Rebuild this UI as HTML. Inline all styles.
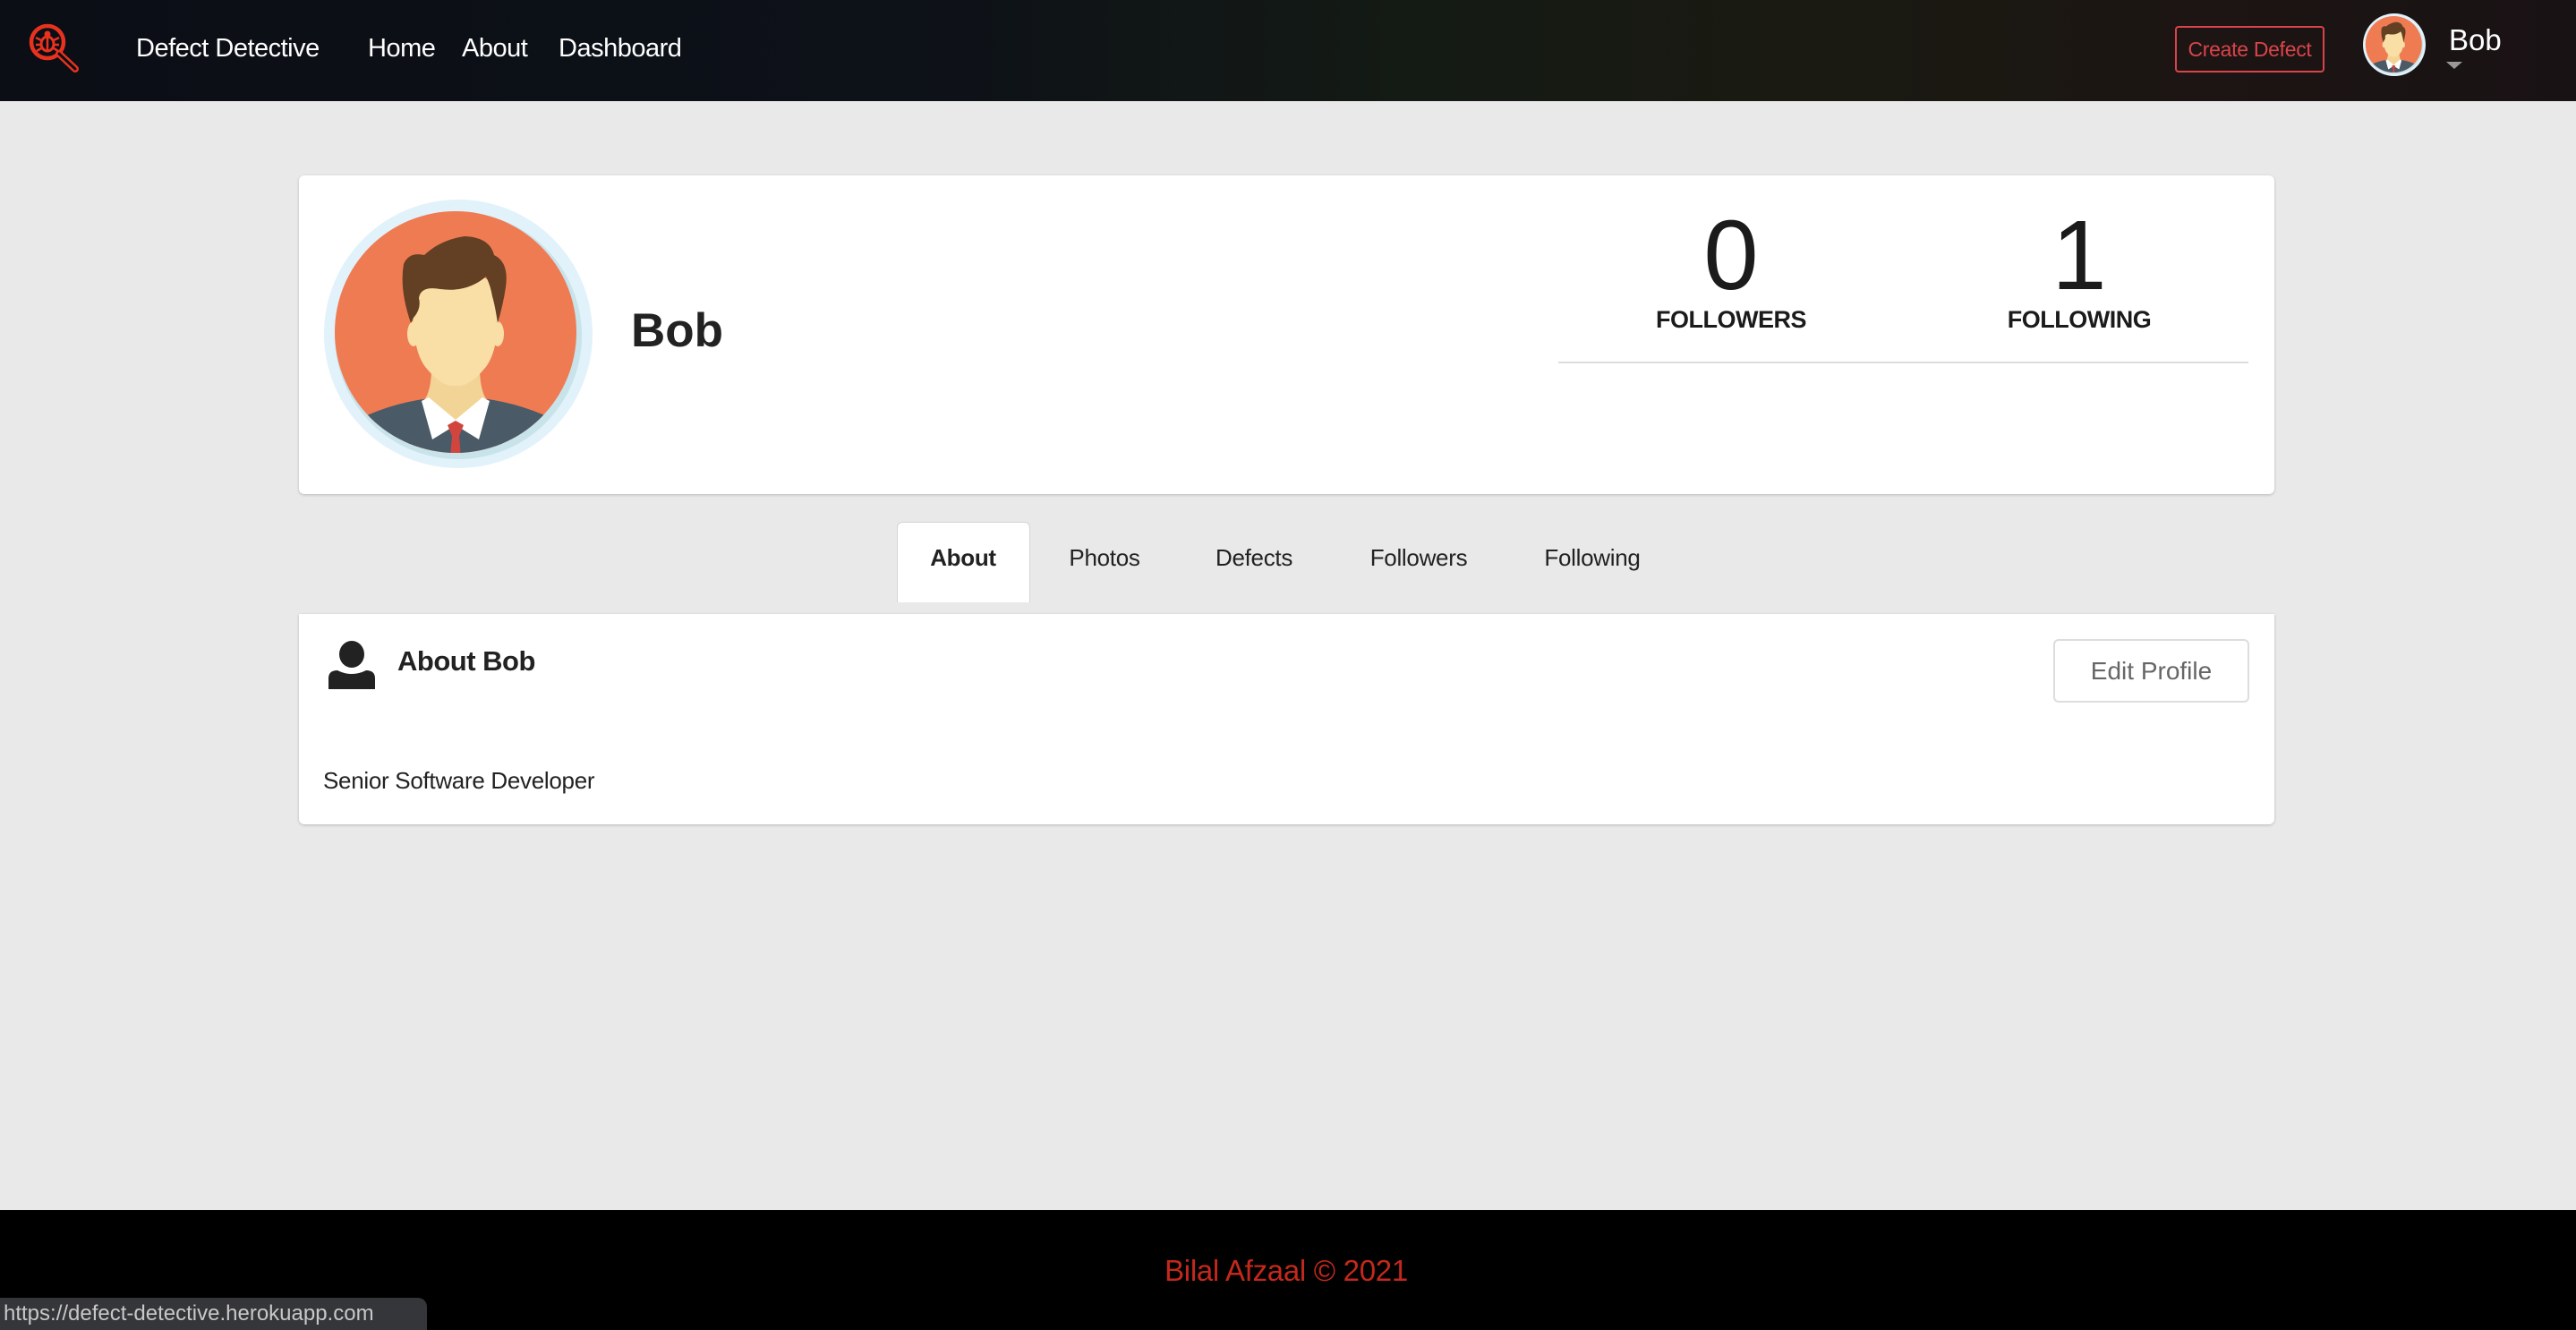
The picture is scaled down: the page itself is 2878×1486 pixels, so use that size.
<!DOCTYPE html>
<html><head><meta charset="utf-8"><style>
*{margin:0;padding:0;box-sizing:border-box}
body{width:2878px;height:1486px;background:#e9e9e9;position:relative;overflow:hidden;font-family:"Liberation Sans",sans-serif;color:#222}
.a{position:absolute;white-space:nowrap}
nav{position:absolute;left:0;top:0;width:2878px;height:113px;background:linear-gradient(90deg,#0b0e15 0%,#0d1118 35%,#141a14 55%,#1a1a12 70%,#1c1513 85%,#191214 100%)}
.nl{color:#fff;font-size:29px;top:38px;letter-spacing:-0.5px}
.card{position:absolute;background:#fff;border-radius:6px;box-shadow:0 1px 3px rgba(0,0,0,.2)}
.tab{position:absolute;top:608px;font-size:26px;color:#222;transform:translateX(-50%);letter-spacing:-0.3px}
</style></head><body>
<nav>
<svg class="a" style="left:28px;top:22px" width="70" height="66" viewBox="28 22 70 66">
<circle cx="53" cy="47" r="18" fill="none" stroke="#e8321e" stroke-width="4.5"/>
<line x1="66" y1="60" x2="84" y2="77" stroke="#e8321e" stroke-width="8" stroke-linecap="round"/>
<line x1="66" y1="60" x2="84" y2="77" stroke="#0b0e15" stroke-width="3" stroke-linecap="round"/>
<ellipse cx="53" cy="49" rx="7" ry="8" fill="none" stroke="#e8321e" stroke-width="3"/>
<circle cx="53" cy="38" r="3.5" fill="#e8321e"/>
<line x1="53" y1="42" x2="53" y2="57" stroke="#e8321e" stroke-width="2.5"/>
<path d="M40 42 L46 45 M40 50 H46 M41 57 L46 54 M66 42 L60 45 M66 50 H60 M65 57 L60 54" stroke="#e8321e" stroke-width="2.5"/>
</svg>
<div class="a nl" style="left:152px">Defect Detective</div>
<div class="a nl" style="left:411px">Home</div>
<div class="a nl" style="left:516px">About</div>
<div class="a nl" style="left:624px">Dashboard</div>
<div class="a" style="left:2430px;top:29px;width:167px;height:52px;border:2px solid #d9444a;border-radius:4px;color:#d9444a;font-size:23px;text-align:center;line-height:48px;letter-spacing:-0.3px">Create Defect</div>
<svg class="a" style="left:2640px;top:15px" width="70" height="70" viewBox="0 0 300 300">
<use href="#av"/>
</svg>
<div class="a" style="left:2736px;top:26px;color:#fff;font-size:33px">Bob</div>
<div class="a" style="left:2733px;top:69px;width:0;height:0;border-left:9px solid transparent;border-right:9px solid transparent;border-top:8px solid #999"></div>
</nav>

<div class="card" style="left:334px;top:196px;width:2207px;height:356px"></div>
<svg class="a" style="left:362px;top:223px" width="300" height="300" viewBox="0 0 300 300">
<defs>
<clipPath id="c2"><circle cx="147" cy="148" r="135"/></clipPath>
<g id="av">
<circle cx="150" cy="150" r="150" fill="#e1f2fa"/>
<circle cx="150" cy="152" r="138" fill="#c8e3ea"/>
<circle cx="147" cy="148" r="135" fill="#ef7b53"/>
<g clip-path="url(#c2)">
<path d="M30 250 Q70 228 118 222 L147 245 L176 222 Q224 228 265 250 L265 320 L30 320Z" fill="#4a5a66"/>
<path d="M120 180 Q121 212 112 224 L147 250 L182 224 Q173 212 174 180Z" fill="#f3d497"/>
<ellipse cx="100" cy="150" rx="7" ry="14" fill="#f9dfa5"/><ellipse cx="194" cy="150" rx="7" ry="14" fill="#f9dfa5"/>
<path d="M99 120 Q97 80 147 82 Q197 80 195 120 Q195 170 180 188 Q162 210 147 208 Q132 210 114 188 Q99 170 99 120Z" fill="#f9dfa5"/>
<path d="M117 221 L147 246 L177 221 L185 225 L173 268 L147 252 L121 268 L109 225Z" fill="#fff"/>
<path d="M138 252 L147 247 L156 252 L151 264 L154 300 H140 L143 264Z" fill="#d2453e"/>
<path d="M97 138 Q84 100 89 72 Q95 58 112 62 Q130 45 157 41 Q185 42 190 62 Q207 70 203 98 Q200 118 194 138 Q191 118 188 108 Q186 96 181 86 Q160 104 130 100 Q108 96 106 110 Q109 122 100 132Z" fill="#633f24"/>
</g>
</g>
</defs>
<use href="#av"/>
</svg>
<div class="a" style="left:705px;top:339px;font-size:53px;font-weight:bold;color:#222">Bob</div>
<div class="a" style="left:1934px;top:222px;transform:translateX(-50%);font-size:110px;color:#1b1b1b">0</div>
<div class="a" style="left:2323px;top:222px;transform:translateX(-50%);font-size:110px;color:#1b1b1b">1</div>
<div class="a" style="left:1934px;top:342px;transform:translateX(-50%);font-size:27px;font-weight:bold;color:#1b1b1b;letter-spacing:-0.5px">FOLLOWERS</div>
<div class="a" style="left:2323px;top:342px;transform:translateX(-50%);font-size:27px;font-weight:bold;color:#1b1b1b;letter-spacing:-0.5px">FOLLOWING</div>
<div class="a" style="left:1741px;top:404px;width:771px;height:2px;background:#ddd"></div>

<div class="a" style="left:1002px;top:583px;width:149px;height:90px;background:#fff;border:1px solid #d4d4d4;border-bottom:none;border-radius:6px 6px 0 0"></div>
<div class="tab" style="left:1076px;font-weight:bold">About</div>
<div class="tab" style="left:1234px">Photos</div>
<div class="tab" style="left:1401px">Defects</div>
<div class="tab" style="left:1585px">Followers</div>
<div class="tab" style="left:1779px">Following</div>

<div class="card" style="left:334px;top:686px;width:2207px;height:235px;border-radius:0 0 6px 6px"></div>
<svg class="a" style="left:365px;top:716px" width="56" height="54" viewBox="0 0 56 54">
<ellipse cx="28" cy="15" rx="14" ry="15" fill="#222"/>
<path d="M2 54 V42 Q2 33 12 33 Q20 37 28 37 Q36 37 44 33 Q54 33 54 42 V54Z" fill="#222"/>
</svg>
<div class="a" style="left:444px;top:721px;font-size:31px;font-weight:bold;color:#222;letter-spacing:-0.5px">About Bob</div>
<div class="a" style="left:2294px;top:714px;width:219px;height:71px;border:2px solid #ddd;border-radius:6px;color:#666;font-size:28px;text-align:center;line-height:67px">Edit Profile</div>
<div class="a" style="left:361px;top:857px;font-size:26px;color:#222;letter-spacing:-0.3px">Senior Software Developer</div>

<div class="a" style="left:0;top:1352px;width:2878px;height:134px;background:#000"></div>
<div class="a" style="left:1437px;top:1401px;transform:translateX(-50%);font-size:33px;color:#c4281c;letter-spacing:-0.3px">Bilal Afzaal © 2021</div>
<div class="a" style="left:0;top:1450px;width:477px;height:36px;background:#35363a;border-radius:0 10px 0 0;color:#c8c8c8;font-size:24px;line-height:36px;padding-left:4px">https://defect-detective.herokuapp.com</div>
</body></html>
